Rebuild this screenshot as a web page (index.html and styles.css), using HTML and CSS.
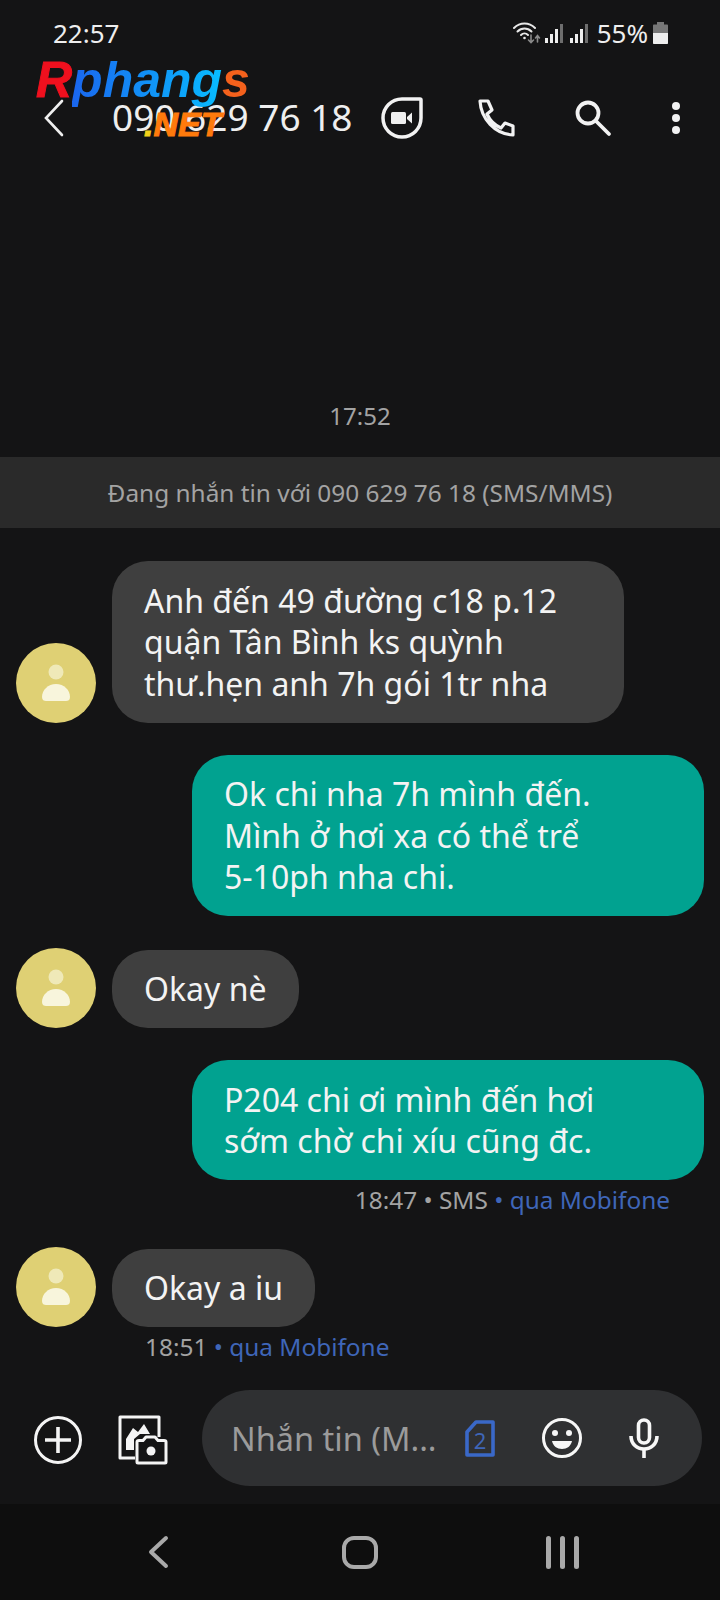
FILE: index.html
```html
<!DOCTYPE html>
<html lang="vi">
<head>
    <meta charset="UTF-8">
    <meta name="viewport" content="width=device-width, initial-scale=1.0">
    <title>090 629 76 18</title>
    <link rel="stylesheet" href="styles.css">
</head>
<body>
    <div class="screen">
        <div class="status-bar">
            <span class="clock">22:57</span>
            <div class="status-icons">
                <svg class="ic-wifi" width="28" height="22" viewBox="0 0 28 22" fill="none" stroke="#e8e8e8" stroke-width="2" stroke-linecap="round">
                    <path d="M1 6C7 0 16 0 22 6"/>
                    <path d="M4.500 9.500C8.500 5.500 14.500 5.500 18.500 9.500"/>
                    <path d="M8 13C10 11 13 11 15 13"/>
                    <circle cx="11.500" cy="16" r="1.300" fill="#e8e8e8" stroke="none"/>
                    <path d="M18 13V20M15.500 18L18 20.500L20.500 18" stroke="#8a8a8a" stroke-width="1.600"/>
                    <path d="M24.500 20V14M22.500 16L24.500 13.500L26.500 16" stroke="#8a8a8a" stroke-width="1.600"/>
                </svg>
                <svg class="ic-signal" width="18" height="19" viewBox="0 0 18 19">
                    <rect x="0" y="14" width="3" height="5" fill="#eeeeee"/>
                    <rect x="5" y="10" width="3" height="9" fill="#eeeeee"/>
                    <rect x="10" y="5" width="3" height="14" fill="#eeeeee"/>
                    <rect x="15" y="0" width="3" height="19" fill="#6e6e6e"/>
                </svg>
                <svg class="ic-signal" width="18" height="19" viewBox="0 0 18 19">
                    <rect x="0" y="14" width="3" height="5" fill="#eeeeee"/>
                    <rect x="5" y="10" width="3" height="9" fill="#eeeeee"/>
                    <rect x="10" y="5" width="3" height="14" fill="#eeeeee"/>
                    <rect x="15" y="0" width="3" height="19" fill="#6e6e6e"/>
                </svg>
                <span class="battery-text">55%</span>
                <svg class="ic-battery" width="15" height="22" viewBox="0 0 15 22">
                    <path d="M4 0H11V2.500H14C14.600 2.500 15 3 15 3.500V11H0V3.500C0 3 .4 2.500 1 2.500H4Z" fill="#777777"/>
                    <path d="M0 11H15V21C15 21.600 14.600 22 14 22H1C.4 22 0 21.600 0 21Z" fill="#eeeeee"/>
                </svg>
            </div>
        </div>

        <div class="toolbar">
            <svg class="ic-back" width="20" height="38" viewBox="0 0 20 38" fill="none" stroke="#efefef" stroke-width="2.600" stroke-linecap="round">
                <path d="M18 2L2 19L18 36"/>
            </svg>
            <span class="contact">090 629 76 18</span>
            <div class="toolbar-actions">
                <svg class="ic-video" width="42" height="42" viewBox="0 0 42 42">
                    <path d="M21 2H39C39.600 2 40 2.400 40 3V21A19 19 0 1 1 21 2Z" fill="none" stroke="#f2f2f2" stroke-width="3.500"/>
                    <rect x="10" y="15" width="15" height="12" rx="1.500" fill="#efefef"/>
                    <path d="M26 20L31 15.500V26.500L26 22Z" fill="#efefef"/>
                </svg>
                <svg class="ic-phone" width="38" height="38" viewBox="0 0 38 38" fill="none" stroke="#f2f2f2" stroke-width="3.200" stroke-linejoin="round">
                    <path d="M2 2L10 2L14 11L9 15C12 22 16 26 23 29L27 24L35 27L35 36C17 35 3 20 2 2Z"/>
                </svg>
                <svg class="ic-search" width="38" height="38" viewBox="0 0 38 38" fill="none" stroke="#f2f2f2" stroke-width="3.800" stroke-linecap="round">
                    <circle cx="13" cy="14" r="10.500"/>
                    <path d="M21 22L34 35"/>
                </svg>
                <svg class="ic-more" width="8" height="34" viewBox="0 0 8 34" fill="#f2f2f2">
                    <circle cx="4" cy="5" r="4"/>
                    <circle cx="4" cy="17" r="4"/>
                    <circle cx="4" cy="29" r="4"/>
                </svg>
            </div>
        </div>

        <div class="logo">
            <span class="logo-r">R</span><span class="logo-phang">phang</span><span class="logo-s">s</span>
            <div class="logo-net"><span class="logo-dot">.</span>NET</div>
        </div>

        <div class="thread">
            <div class="thread-time">17:52</div>
            <div class="thread-info">Đang nhắn tin với 090 629 76 18 (SMS/MMS)</div>

            <div class="msg msg-in">
                <div class="avatar">
                    <svg width="34" height="38" viewBox="0 0 34 38">
                        <circle cx="17" cy="8" r="7.500" fill="#efe9b8"/>
                        <path d="M17 20C25 20 31 26 31 33C31 36 29 37 27 37H7C5 37 3 36 3 33C3 26 9 20 17 20Z" fill="#f8f5dc"/>
                    </svg>
                </div>
                <div class="bubble bubble-wide">Anh đến 49 đường c18 p.12<br>quận Tân Bình ks quỳnh<br>thư.hẹn anh 7h gói 1tr nha</div>
            </div>

            <div class="msg msg-out">
                <div class="bubble bubble-wide">Ok chi nha 7h mình đến.<br>Mình ở hơi xa có thể trể<br>5-10ph nha chi.</div>
            </div>

            <div class="msg msg-in">
                <div class="avatar">
                    <svg width="34" height="38" viewBox="0 0 34 38">
                        <circle cx="17" cy="8" r="7.500" fill="#efe9b8"/>
                        <path d="M17 20C25 20 31 26 31 33C31 36 29 37 27 37H7C5 37 3 36 3 33C3 26 9 20 17 20Z" fill="#f8f5dc"/>
                    </svg>
                </div>
                <div class="bubble">Okay nè</div>
            </div>

            <div class="msg msg-out msg-with-meta">
                <div class="bubble bubble-wide">P204 chi ơi mình đến hơi<br>sớm chờ chi xíu cũng đc.</div>
            </div>
            <div class="meta meta-out">18:47 • SMS <span class="meta-sim">• qua Mobifone</span></div>

            <div class="msg msg-in msg-with-meta">
                <div class="avatar">
                    <svg width="34" height="38" viewBox="0 0 34 38">
                        <circle cx="17" cy="8" r="7.500" fill="#efe9b8"/>
                        <path d="M17 20C25 20 31 26 31 33C31 36 29 37 27 37H7C5 37 3 36 3 33C3 26 9 20 17 20Z" fill="#f8f5dc"/>
                    </svg>
                </div>
                <div class="bubble">Okay a iu</div>
            </div>
            <div class="meta meta-in">18:51 <span class="meta-sim">• qua Mobifone</span></div>
        </div>

        <div class="composer">
            <svg class="ic-plus" width="50" height="50" viewBox="0 0 50 50" fill="none" stroke="#f4f4f4" stroke-width="3">
                <circle cx="25" cy="25" r="22.500"/>
                <path d="M12 25H38M25 12V38" stroke-width="3.600"/>
            </svg>
            <svg class="ic-gallery" width="50" height="50" viewBox="0 0 50 50" fill="none" stroke="#f4f4f4" stroke-width="3" stroke-linejoin="round">
                <path d="M17 43H2V2H41V22"/>
                <path d="M8 35V24L15 13L20 17L26 9L32 19H22L16 24V35Z" fill="#f4f4f4" stroke="none"/>
                <path d="M19 27C19 26 20 25.500 21 25.500H25L28 22H37L40 25.500H46C47 25.500 48 26 48 27V47C48 47.500 47.500 48 47 48H20C19.500 48 19 47.500 19 47Z"/>
                <circle cx="33" cy="36" r="4.500" fill="#f4f4f4" stroke="none"/>
            </svg>
            <div class="input-pill">
                <span class="placeholder">Nhắn tin (M...</span>
                <div class="sim-badge">
                    <svg width="30" height="37" viewBox="0 0 30 37" fill="none" stroke="#3a68c8" stroke-width="3.600" stroke-linejoin="round">
                        <path d="M11 2H28V35H2V12Z"/>
                    </svg>
                    <span class="sim-num">2</span>
                </div>
                <svg class="ic-smile" width="42" height="42" viewBox="0 0 42 42" fill="none" stroke="#f7f7f7" stroke-width="3">
                    <circle cx="21" cy="21" r="18.500"/>
                    <circle cx="14" cy="16" r="3" fill="#f7f7f7" stroke="none"/>
                    <circle cx="28" cy="16" r="3" fill="#f7f7f7" stroke="none"/>
                    <path d="M11 24H31C30 29 26 32 21 32C16 32 12 29 11 24Z" fill="#f7f7f7" stroke="none"/>
                </svg>
                <svg class="ic-mic" width="30" height="40" viewBox="0 0 30 40" fill="none" stroke="#f7f7f7" stroke-width="3.600">
                    <rect x="9.500" y="2" width="11" height="23" rx="5.500"/>
                    <path d="M2 18C2 26 8 31 15 31C22 31 28 26 28 18"/>
                    <path d="M15 31V40"/>
                </svg>
            </div>
        </div>

        <div class="nav-bar">
            <div class="nav-item">
                <svg width="22" height="34" viewBox="0 0 22 34" fill="none" stroke="#a9a9a9" stroke-width="4" stroke-linecap="round" stroke-linejoin="round">
                    <path d="M19 3L4 17L19 31"/>
                </svg>
            </div>
            <div class="nav-item"><div class="nav-home"></div></div>
            <div class="nav-item">
                <div class="nav-recent"><i></i><i></i><i></i></div>
            </div>
        </div>
    </div>
</body>
</html>
```

FILE: styles.css
```css
:root {
    --bg-color: #141415;
    --nav-bg: #0e0e0e;
    --band-bg: #2a2a2a;
    --bubble-in: #3f3f3f;
    --bubble-out: #01a290;
    --pill-bg: #2f3032;
    --muted: #a3a3a3;
    --text-color: #f3f3f3;
    --sim-blue: #3f66b8;
}

* {
    box-sizing: border-box;
}

body {
    margin: 0;
    background-color: var(--bg-color);
    color: var(--text-color);
    font-family: "Noto Sans", "Open Sans", sans-serif;
}

.screen {
    position: relative;
    display: flex;
    flex-direction: column;
    width: 720px;
    height: 1600px;
    overflow: hidden;
}

.status-bar {
    display: flex;
    justify-content: space-between;
    align-items: center;
    height: 66px;
    padding: 0 52px 0 53px;
    font-size: 26px;
    color: #eeeeee;
}

.status-icons {
    display: flex;
    align-items: center;
}

.ic-wifi {
    margin-right: 4px;
}

.ic-signal {
    margin-right: 7px;
}

.battery-text {
    margin: 0 5px 0 2px;
}

.toolbar {
    display: flex;
    align-items: center;
    height: 104px;
    padding-left: 44px;
}

.contact {
    margin-left: 48px;
    padding-bottom: 4px;
    font-size: 37px;
    color: #eeeeee;
    white-space: nowrap;
}

.toolbar-actions {
    display: flex;
    align-items: center;
    margin-left: 28px;
}

.ic-phone {
    margin-left: 55px;
}

.ic-search {
    margin-left: 59px;
}

.ic-more {
    margin-left: 59px;
}

/* watermark over the toolbar */
.logo {
    position: absolute;
    left: 36px;
    top: 50px;
    font-family: "Liberation Sans", sans-serif;
    font-size: 50px;
    line-height: 60px;
    font-weight: bold;
    font-style: italic;
    white-space: nowrap;
}

.logo-r {
    color: #f0101e;
    -webkit-text-stroke: 1px #f0101e;
}

.logo-phang {
    background: linear-gradient(90deg, #1a66ee, #08bcff);
    -webkit-background-clip: text;
    background-clip: text;
    color: transparent;
}

.logo-s {
    color: #f4611c;
}

.logo-net {
    position: absolute;
    left: 108px;
    top: 56px;
    font-size: 34px;
    line-height: 36px;
    color: #ff7a0c;
    -webkit-text-stroke: 1px #ff7a0c;
}

.logo-dot {
    color: #f2d21a;
    -webkit-text-stroke: 1px #f2d21a;
}

.thread {
    flex: 1;
}

.thread-time {
    height: 32px;
    margin-top: 230px;
    font-size: 24px;
    line-height: 32px;
    text-align: center;
    color: var(--muted);
}

.thread-info {
    height: 71px;
    margin-top: 25px;
    margin-bottom: 33px;
    background-color: var(--band-bg);
    font-size: 24.400px;
    line-height: 71px;
    text-align: center;
    color: var(--muted);
}

.msg {
    display: flex;
    align-items: flex-end;
    margin-bottom: 32px;
}

.msg-with-meta {
    margin-bottom: 0;
}

.msg-in {
    padding-left: 16px;
}

.msg-out {
    justify-content: flex-end;
    padding-right: 16px;
}

.avatar {
    display: flex;
    justify-content: center;
    align-items: center;
    flex-shrink: 0;
    width: 80px;
    height: 80px;
    margin-right: 16px;
    border-radius: 50%;
    background-color: #dfd074;
}

.bubble {
    padding: 18.500px 32px;
    border-radius: 36px;
    background-color: var(--bubble-in);
    font-size: 32px;
    line-height: 41.500px;
    white-space: nowrap;
}

.bubble-wide {
    width: 512px;
}

.msg-out .bubble {
    background-color: var(--bubble-out);
}

.meta {
    height: 67px;
    padding-top: 3px;
    font-size: 24.400px;
    line-height: 34px;
    color: var(--muted);
}

.meta-out {
    padding-right: 50px;
    text-align: right;
}

.meta-in {
    height: 62px;
    padding-left: 145px;
}

.meta-sim {
    color: var(--sim-blue);
}

.composer {
    display: flex;
    align-items: center;
    height: 114px;
    padding: 0 18px 18px 33px;
}

.ic-plus {
    margin-top: 3px;
}

.ic-gallery {
    margin-top: 3px;
    margin-left: 35px;
}

.input-pill {
    display: flex;
    align-items: center;
    flex: 1;
    height: 96px;
    margin-left: 34px;
    padding-left: 29px;
    border-radius: 48px;
    background-color: var(--pill-bg);
}

.placeholder {
    width: 234px;
    font-size: 32.500px;
    color: #9b9b9b;
    white-space: nowrap;
}

.sim-badge {
    position: relative;
    width: 30px;
    height: 37px;
}

.sim-badge svg {
    display: block;
}

.sim-num {
    position: absolute;
    left: 0;
    right: 0;
    top: 7px;
    font-size: 22px;
    line-height: 26px;
    text-align: center;
    color: var(--sim-blue);
}

.ic-smile {
    margin-left: 46px;
}

.ic-mic {
    margin-left: 46px;
}

.nav-bar {
    display: flex;
    justify-content: center;
    align-items: center;
    height: 96px;
    background-color: var(--nav-bg);
}

.nav-item {
    display: flex;
    justify-content: center;
    width: 202px;
}

.nav-home {
    width: 36px;
    height: 33px;
    border: 4px solid #a9a9a9;
    border-radius: 12px;
}

.nav-recent {
    display: flex;
    gap: 9px;
}

.nav-recent i {
    display: block;
    width: 5px;
    height: 33px;
    border-radius: 3px;
    background-color: #a9a9a9;
}
```
